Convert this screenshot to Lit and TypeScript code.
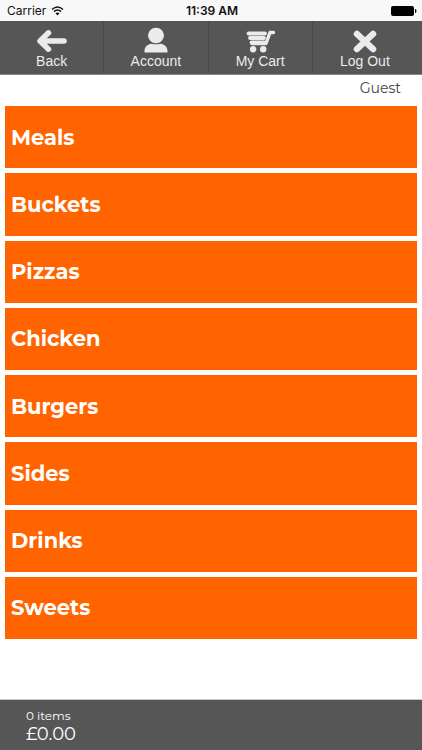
import { LitElement, html, css, svg } from "lit";
import { customElement, property, state } from "lit/decorators.js";

const icons = {
  back: svg`<path d="M28 14H5M12.500 5.800L4 14l8.500 8.200" fill="none" stroke="currentColor" stroke-width="5.500" stroke-linecap="round" stroke-linejoin="round"/>`,
  account: svg`<ellipse cx="16" cy="8.500" rx="8" ry="7.700" fill="currentColor"/><path d="M4.500 25.500v-1.500c0-4 3-7 7-7.300 3 .8 6 .8 9 0 4 .3 7 3.300 7 7.300v1.500z" fill="currentColor"/>`,
  cart: svg`<g fill="none" stroke="currentColor" stroke-linecap="round" stroke-linejoin="round"><path d="M4.500 6.500H21M6 11h14M7.500 15.500H20" stroke-width="3.800"/><path d="M29.500 5.500H26L22 16.500H8" stroke-width="3.400"/></g><circle cx="9.200" cy="22.300" r="3.200" fill="currentColor"/><circle cx="19.200" cy="22.300" r="3.200" fill="currentColor"/>`,
  logout: svg`<path d="M8 7l16 15M24 7L8 22" fill="none" stroke="currentColor" stroke-width="6.500" stroke-linecap="round"/>`,
};

type IconName = keyof typeof icons;

@customElement("status-bar")
export class StatusBar extends LitElement {
  static styles = css`
    :host {
      display: grid;
      grid-template-columns: 1fr auto 1fr;
      align-items: center;
      height: 21px;
      padding: 0 5px 0 7px;
      background: #f8f8f8;
      color: #111;
      font: 12px/20px Inter, sans-serif;
    }
    .carrier {
      display: flex;
      align-items: center;
      gap: 5px;
    }
    .time {
      font-weight: 600;
    }
    .battery {
      justify-self: end;
    }
    svg {
      display: block;
    }
  `;

  render() {
    return html`
      <span class="carrier">
        Carrier
        <svg width="13" height="10" viewBox="0 0 13 10" aria-hidden="true">
          <path d="M1 3.500Q6.500-1.500 12 3.500M3 5.600Q6.500 2.400 10 5.600" fill="none" stroke="currentColor" stroke-width="1.500" />
          <path d="M4.500 7.300Q6.500 5.700 8.500 7.300L6.500 9.500z" fill="currentColor" />
        </svg>
      </span>
      <span class="time">11:39 AM</span>
      <svg class="battery" width="26" height="10" viewBox="0 0 26 10" role="img" aria-label="Battery full">
        <rect width="23" height="10" rx="2" fill="#000" />
        <path d="M24 3q1.500 0 1.500 2T24 7z" fill="#000" />
      </svg>
    `;
  }
}

@customElement("nav-bar")
export class NavBar extends LitElement {
  static styles = css`
    :host {
      display: block;
      background: #565656;
      border-bottom: 1px solid #8a8a8a;
    }
    .tabs {
      display: grid;
      grid-template-columns: repeat(4, 1fr);
      padding-right: 5px;
    }
    .tab {
      display: flex;
      flex-direction: column;
      align-items: center;
      height: 53px;
      padding: 6px 0 0;
      border: 0;
      border-right: 1px solid #4b4b4b;
      background: none;
      color: #ebebeb;
      font: 14px/14px "Liberation Sans", sans-serif;
      cursor: pointer;
    }
    .tab:last-child {
      border-right: 0;
    }
    .icon {
      display: block;
      width: 32px;
      height: 27px;
    }
  `;

  private tabs: { label: string; icon: IconName }[] = [
    { label: "Back", icon: "back" },
    { label: "Account", icon: "account" },
    { label: "My Cart", icon: "cart" },
    { label: "Log Out", icon: "logout" },
  ];

  render() {
    return html`
      <nav class="tabs">
        ${this.tabs.map(
          (t) => html`
            <button class="tab" type="button">
              <svg class="icon" viewBox="0 0 32 27" aria-hidden="true">${icons[t.icon]}</svg>
              ${t.label}
            </button>
          `
        )}
      </nav>
    `;
  }
}

@customElement("cart-summary")
export class CartSummary extends LitElement {
  @property({ type: Number }) items = 0;
  @property({ type: Number }) total = 0;

  static styles = css`
    :host {
      display: block;
      padding: 8px 26px 6px;
      background: #565656;
      border-top: 1px solid #c8c8c8;
      color: #fff;
      font-family: Montserrat, Inter, sans-serif;
    }
    .count {
      font-size: 12px;
      line-height: 16px;
    }
    .total {
      font-size: 18px;
      line-height: 20px;
    }
  `;

  render() {
    return html`
      <div class="count">${this.items} items</div>
      <div class="total">£${this.total.toFixed(2)}</div>
    `;
  }
}

@customElement("app-root")
export class AppRoot extends LitElement {
  @state() private categories = [
    "Meals",
    "Buckets",
    "Pizzas",
    "Chicken",
    "Burgers",
    "Sides",
    "Drinks",
    "Sweets",
  ];

  static styles = css`
    :host {
      display: flex;
      flex-direction: column;
      min-height: 100vh;
      background: #fff;
      font-family: Montserrat, Inter, sans-serif;
    }
    .user {
      padding: 3px 21px 8px;
      color: #444;
      font-size: 14px;
      line-height: 20px;
      text-align: right;
    }
    .menu {
      flex: 1;
      display: grid;
      grid-auto-rows: minmax(44px, 1fr);
      gap: 5px;
      padding: 0 5px 60px;
    }
    .category {
      padding: 0 6px;
      border: 0;
      background: #ff6400;
      color: #fff;
      font: inherit;
      font-size: 21px;
      font-weight: 700;
      text-align: left;
      cursor: pointer;
    }
  `;

  render() {
    return html`
      <status-bar></status-bar>
      <nav-bar></nav-bar>
      <div class="user">Guest</div>
      <main class="menu">
        ${this.categories.map((c) => html`<button class="category" type="button">${c}</button>`)}
      </main>
      <cart-summary .items=${0} .total=${0}></cart-summary>
    `;
  }
}
